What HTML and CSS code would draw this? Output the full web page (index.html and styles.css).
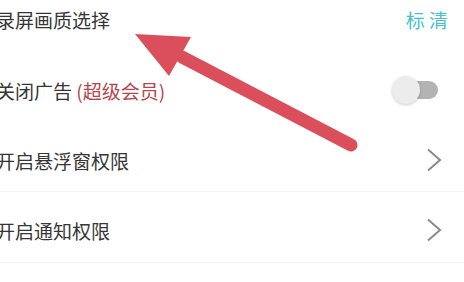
FILE: index.html
```html
<!DOCTYPE html>
<html lang="zh-CN">
<head>
    <meta charset="UTF-8">
    <meta name="viewport" content="width=device-width, initial-scale=1.0">
    <title>设置</title>
    <link rel="stylesheet" href="styles.css">
</head>
<body>

    <!-- 设置列表 -->
    <div class="setting-list">
        <div class="setting-row first">
            <span class="label">录屏画质选择</span>
            <span class="value">标 清</span>
        </div>
        <div class="setting-row">
            <span class="label">关闭广告 <em class="vip">(超级会员)</em></span>
            <span class="switch"><span class="thumb"></span></span>
        </div>
        <div class="setting-row line">
            <span class="label">开启悬浮窗权限</span>
            <svg class="chevron" width="16" height="24" viewBox="0 0 16 24"><path d="M2 1.5 L14 12 L2 22.5" fill="none" stroke="#8a8a8a" stroke-width="2"/></svg>
        </div>
        <div class="setting-row line last">
            <span class="label">开启通知权限</span>
            <svg class="chevron" width="16" height="24" viewBox="0 0 16 24"><path d="M2 1.5 L14 12 L2 22.5" fill="none" stroke="#8a8a8a" stroke-width="2"/></svg>
        </div>
    </div>

    <!-- 标注箭头 -->
    <svg class="arrow" width="464" height="282" viewBox="0 0 464 282">
        <line x1="182" y1="57" x2="351" y2="145" stroke="#da4f5b" stroke-width="13" stroke-linecap="round"/>
        <polygon points="135,34 191,37 169,76" fill="#da4f5b"/>
    </svg>

</body>
</html>
```

FILE: styles.css
```css
/* 设置页面 */
body {
    margin: 0;
    padding: 0;
    background-color: #fff;
    font-family: "Noto Sans CJK SC", "Noto Sans", sans-serif;
    overflow: hidden;
    height: 282px;
    position: relative;
}

.setting-list {
    margin-top: -17px;
    margin-left: -4px;
}

.setting-row {
    height: 70px;
    display: flex;
    align-items: center;
    justify-content: space-between;
    padding-right: 16px;
}

.setting-row.first {
    height: 72px;
}

.setting-row.line {
    height: 62px;
    padding-top: 4px;
    border-bottom: 1px solid #f3f3f3;
}

.setting-row.last {
    height: 64px;
    padding-top: 6px;
}

.label {
    font-size: 19px;
    color: #363636;
    line-height: 1;
}

.vip {
    font-style: normal;
    color: #b5474b;
}

.value {
    font-size: 19px;
    color: #47bfcd;
    line-height: 1;
}

/* 开关 */
.switch {
    position: relative;
    width: 36px;
    height: 18px;
    border-radius: 9px;
    background-color: #b3b3b3;
    margin-right: 10px;
}

.thumb {
    position: absolute;
    left: -10px;
    top: -5px;
    width: 28px;
    height: 28px;
    border-radius: 50%;
    background-color: #ececec;
    box-shadow: 0 1px 3px rgba(0,0,0,0.2);
}

.chevron {
    margin-right: 6px;
}

/* 箭头覆盖层 */
.arrow {
    position: absolute;
    top: 0;
    left: 0;
}
```
